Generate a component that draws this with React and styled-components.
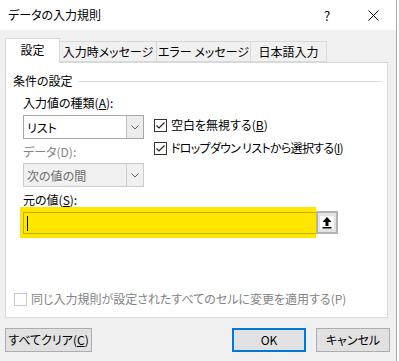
import React from 'react';
import styled, { createGlobalStyle } from 'styled-components';

const GlobalStyle = createGlobalStyle`
    html, body {
        margin: 0;
        padding: 0;
        background: #ffffff;
    }
    body {
        font-family: "Noto Sans CJK JP", "Noto Sans", sans-serif;
        font-size: 12px;
        font-feature-settings: "palt";
        color: #000;
    }
`;

const Window = styled.div`
    width: 396px;
    height: 361px;
    background: #f0f0f0;
    border-right: 1px solid #a9a9a9;
    display: flex;
    flex-direction: column;
    overflow: hidden;
`;

const TitleBar = styled.div`
    height: 30px;
    background: #ffffff;
    display: flex;
    align-items: center;
    padding-left: 8px;
    flex-shrink: 0;

    .title{
        font-size: 12px;
        line-height: 16px;
        margin-top: -1px;
    }
`;

const CaptionButton = styled.div`
    width: 46px;
    height: 30px;
    display: flex;
    align-items: center;
    justify-content: center;
    font-size: 13px;
    margin-left: ${p => (p.$first ? 'auto' : '0')};
`;

const TabStrip = styled.div`
    display: flex;
    align-items: flex-end;
    height: 24px;
    margin-top: 8px;
    padding-left: 5px;
    position: relative;
    z-index: 1;
`;

const Tab = styled.div`
    width: ${p => p.$w}px;
    height: ${p => (p.$active ? 25 : 21)}px;
    margin-bottom: ${p => (p.$active ? -1 : 0)}px;
    margin-left: ${p => (p.$first ? 0 : -1)}px;
    box-sizing: border-box;
    border: 1px solid #d9d9d9;
    border-bottom: ${p => (p.$active ? 'none' : '1px solid #d9d9d9')};
    background: ${p => (p.$active ? '#ffffff' : '#f0f0f0')};
    display: flex;
    align-items: center;
    justify-content: center;
    font-size: 12px;
    line-height: 16px;
    padding-bottom: ${p => (p.$active ? 3 : 0)}px;
    white-space: nowrap;
`;

const Panel = styled.div`
    margin-left: 5px;
    width: 383px;
    height: 256px;
    box-sizing: border-box;
    background: #ffffff;
    border: 1px solid #d9d9d9;
    padding: 10px 5px 10px 7px;
    display: flex;
    flex-direction: column;
`;

const GroupHeader = styled.div`
    display: flex;
    align-items: center;
    gap: 5px;
    height: 16px;
    line-height: 16px;

    &::after{
        content: "";
        flex: 1;
        height: 1px;
        background: #dcdcdc;
    }
`;

const Indent = styled.div`
    padding-left: 10px;
    margin-top: 6px;
`;

const FormRow = styled.div`
    display: flex;
    gap: 10px;
`;

const Column = styled.div`
    display: flex;
    flex-direction: column;
    width: ${p => (p.$w ? `${p.$w}px` : 'auto')};
    padding-top: ${p => p.$pt || 0}px;
    gap: ${p => p.$gap || 0}px;
`;

const Label = styled.div`
    height: 16px;
    line-height: 16px;
    color: ${p => (p.$disabled ? '#838383' : '#000')};
    margin-top: ${p => p.$mt || 0}px;
    white-space: nowrap;
`;

const Select = styled.div`
    margin-top: ${p => p.$mt || 0}px;
    height: 24px;
    box-sizing: border-box;
    border: 1px solid ${p => (p.$disabled ? '#cccccc' : '#a8a8a8')};
    background: ${p => (p.$disabled ? '#f0f0f0' : '#ffffff')};
    display: flex;
    align-items: stretch;

    .value{
        flex: 1;
        display: flex;
        align-items: center;
        padding-left: 3px;
        color: ${p => (p.$disabled ? '#6d6d6d' : '#000')};
    }

    .arrow{
        width: 16px;
        border-left: 1px solid ${p => (p.$disabled ? '#cccccc' : '#c4c4c4')};
        background: ${p => (p.$disabled ? '#f0f0f0' : '#ececec')};
        display: flex;
        align-items: center;
        justify-content: center;
    }
`;

const CheckRow = styled.label`
    display: flex;
    align-items: center;
    gap: 4px;
    height: 16px;
    line-height: 16px;
    white-space: nowrap;
    color: ${p => (p.$disabled ? '#838383' : '#000')};
    margin-left: ${p => p.$ml || 0}px;

    .text{
        letter-spacing: ${p => p.$tight || 0}px;
        white-space: pre;
    }
`;

const Box = styled.span`
    width: 13px;
    height: 13px;
    box-sizing: border-box;
    border: 1px solid ${p => (p.$disabled ? '#c8c8c8' : '#333333')};
    background: #ffffff;
    display: flex;
    align-items: center;
    justify-content: center;
    flex-shrink: 0;
`;

const FieldRow = styled.div`
    display: flex;
    align-items: flex-start;
    margin-top: -1px;
    margin-left: -3px;
`;

const Highlight = styled.div`
    width: 296px;
    height: 31px;
    box-sizing: border-box;
    background: #ffe600;
    padding: 5px 0 4px 3px;
`;

const TextInput = styled.div`
    height: 22px;
    box-sizing: border-box;
    border: 1px solid #c2ad00;
    border-right: none;
    display: flex;
    align-items: center;
    padding-left: 3px;

    .caret{
        width: 1px;
        height: 15px;
        background: #000;
    }
`;

const RefButton = styled.div`
    width: 22px;
    height: 23px;
    margin-top: 4px;
    box-sizing: border-box;
    border: 2px solid #b3b3b3;
    background: #e3e3e3;
    display: flex;
    align-items: center;
    justify-content: center;
`;

const Spacer = styled.div`
    flex: 1;
`;

const Footer = styled.div`
    display: flex;
    align-items: center;
    gap: 10px;
    margin-top: 10px;
    padding: 0 6px 0 5px;
`;

const Button = styled.div`
    width: ${p => p.$w}px;
    height: 24px;
    box-sizing: border-box;
    background: #e1e1e1;
    border: ${p => (p.$default ? '2px solid #0078d7' : '1px solid #adadad')};
    display: flex;
    align-items: center;
    justify-content: center;
    line-height: 16px;
    white-space: nowrap;
    margin-left: ${p => (p.$push ? 'auto' : '0')};
`;

const Chevron = ({ color }) => (
    <svg width="8" height="5" viewBox="0 0 8 5">
        <polyline points="0.5,0.5 4,4 7.5,0.5" fill="none" stroke={color} strokeWidth="1" />
    </svg>
);

const Check = () => (
    <svg width="11" height="11" viewBox="0 0 11 11">
        <polyline points="1.5,5.5 4,8 9.5,2.5" fill="none" stroke="#222" strokeWidth="1.2" />
    </svg>
);

const UpArrow = () => (
    <svg width="14" height="13" viewBox="0 0 14 13">
        <rect x="0" y="0" width="14" height="13" fill="#ffffff" />
        <polygon points="7,1 11.5,6 2.5,6" fill="#000" />
        <rect x="5.5" y="6" width="3" height="4" fill="#000" />
        <rect x="2.5" y="11" width="9" height="1.5" fill="#000" />
    </svg>
);

const CloseIcon = () => (
    <svg width="11" height="11" viewBox="0 0 11 11">
        <path d="M0.5 0.5 L10.5 10.5 M10.5 0.5 L0.5 10.5" stroke="#000" strokeWidth="1" fill="none" />
    </svg>
);

const TABS = [
    { name: '設定', w: 55, active: true },
    { name: '入力時メッセージ', w: 98 },
    { name: 'エラー メッセージ', w: 95 },
    { name: '日本語入力', w: 77 },
];

const App = () => {
    return (
        <>
            <GlobalStyle />
            <Window>
                <TitleBar>
                    <span className="title">データの入力規則</span>
                    <CaptionButton $first>?</CaptionButton>
                    <CaptionButton><CloseIcon /></CaptionButton>
                </TitleBar>

                <TabStrip>
                    {TABS.map((tab, i) => (
                        <Tab key={tab.name} $w={tab.w} $active={tab.active} $first={i === 0}>
                            {tab.name}
                        </Tab>
                    ))}
                </TabStrip>

                <Panel>
                    <GroupHeader>条件の設定</GroupHeader>
                    <Indent>
                        <FormRow>
                            <Column $w={121}>
                                <Label>入力値の種類(<u>A</u>):</Label>
                                <Select $mt={4}>
                                    <span className="value">リスト</span>
                                    <span className="arrow"><Chevron color="#606060" /></span>
                                </Select>
                                <Label $disabled $mt={5}>データ(D):</Label>
                                <Select $disabled $mt={3}>
                                    <span className="value">次の値の間</span>
                                    <span className="arrow"><Chevron color="#606060" /></span>
                                </Select>
                                <Label $mt={5}>元の値(<u>S</u>):</Label>
                            </Column>
                            <Column $pt={22} $gap={7}>
                                <CheckRow>
                                    <Box><Check /></Box>
                                    <span className="text">空白を無視する(<u>B</u>)</span>
                                </CheckRow>
                                <CheckRow $tight={-0.7}>
                                    <Box><Check /></Box>
                                    <span className="text">ドロップダウン リストから選択する(<u>I</u>)</span>
                                </CheckRow>
                            </Column>
                        </FormRow>
                        <FieldRow>
                            <Highlight>
                                <TextInput>
                                    <span className="caret" />
                                </TextInput>
                            </Highlight>
                            <RefButton><UpArrow /></RefButton>
                        </FieldRow>
                    </Indent>
                    <Spacer />
                    <CheckRow $disabled $ml={1}>
                        <Box $disabled />
                        <span className="text">同じ入力規則が設定されたすべてのセルに変更を適用する(P)</span>
                    </CheckRow>
                </Panel>

                <Footer>
                    <Button $w={87}><span>すべてクリア(<u>C</u>)</span></Button>
                    <Button $w={74} $default $push>OK</Button>
                    <Button $w={74}>キャンセル</Button>
                </Footer>
            </Window>
        </>
    );
};

export default App;
